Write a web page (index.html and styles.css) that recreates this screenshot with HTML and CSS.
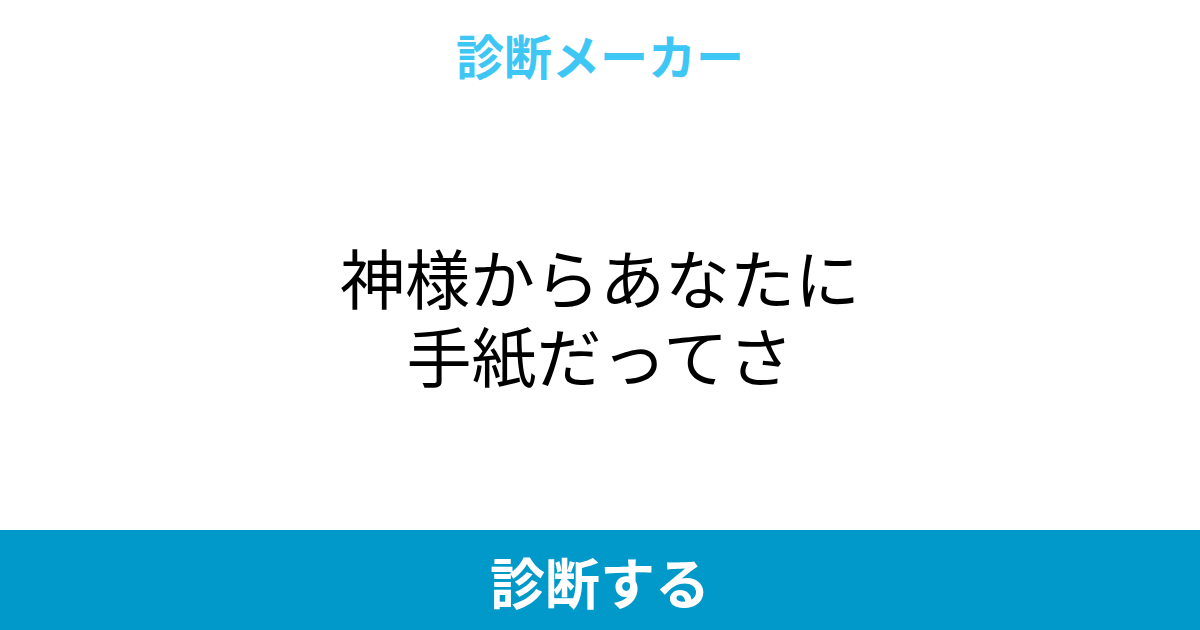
FILE: index.html
```html
<!DOCTYPE html>
<html lang="ja">
<head>
  <meta charset="UTF-8" />
  <meta name="viewport" content="width=device-width, initial-scale=1.0" />
  <title>診断メーカー</title>
  <link rel="stylesheet" href="styles.css">
</head>
<body>
  <div class="pagina">
    <!-- Cabeçalho com o nome do site -->
    <header class="topo">
      <span class="marca">診断メーカー</span>
    </header>

    <!-- Título do diagnóstico -->
    <main class="conteudo">
      <h1 class="titulo">神様からあなたに<br>手紙だってさ</h1>
    </main>

    <!-- Barra de ação -->
    <footer class="barra">
      <span class="botao">診断する</span>
    </footer>
  </div>
</body>
</html>
```

FILE: styles.css
```css
:root {
  --cor-marca: #3ec6f5;
  --cor-barra: #0099c9;
  --cor-texto: #000000;
}

* {
  box-sizing: border-box;
  margin: 0;
  padding: 0;
  font-family: "Noto Sans CJK JP", "Noto Sans", sans-serif;
}

body {
  background: #fff;
  width: 1200px;
  height: 630px;
  overflow: hidden;
}

.pagina {
  display: flex;
  flex-direction: column;
  height: 630px;
}

.topo {
  height: 108px;
  display: flex;
  align-items: center;
  justify-content: center;
}

.marca {
  color: var(--cor-marca);
  font-size: 48px;
  font-weight: 700;
  line-height: 1;
}

.conteudo {
  flex: 1;
  display: flex;
  align-items: center;
  justify-content: center;
  padding-bottom: 8px;
}

.titulo {
  color: var(--cor-texto);
  font-size: 65px;
  font-weight: 400;
  line-height: 78px;
  text-align: center;
}

.barra {
  height: 100px;
  background: var(--cor-barra);
  display: flex;
  align-items: center;
  justify-content: center;
}

.botao {
  color: #fff;
  font-size: 55px;
  font-weight: 700;
  line-height: 1;
}
```
